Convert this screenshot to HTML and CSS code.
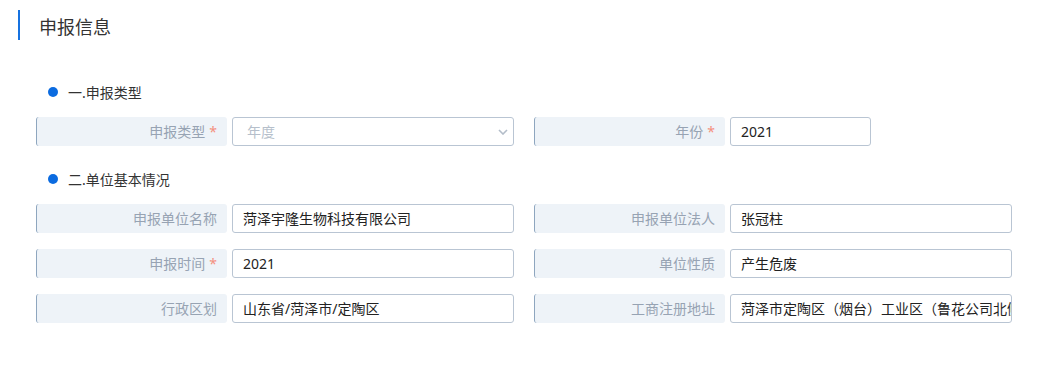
FILE: index.html
```html
<!DOCTYPE html>
<html lang="zh">
<head>
<meta charset="utf-8">
<link rel="stylesheet" href="styles.css">
</head>
<body>
<div class="page">
  <div class="header"><span class="bar"></span><h1 class="title">申报信息</h1></div>
  <div class="form">
    <div class="section-title"><span class="dot"></span>一.申报类型</div>
    <div class="rows">
      <div class="row">
        <div class="field">
          <div class="label">申报类型<span class="req">*</span></div>
          <div class="input select"><span class="placeholder">年度</span>
            <svg class="chev" width="10" height="6" viewBox="0 0 10 6"><path d="M1 1 L5 5 L9 1" fill="none" stroke="#b3bdc9" stroke-width="1.6"/></svg>
          </div>
        </div>
        <div class="field">
          <div class="label">年份<span class="req">*</span></div>
          <div class="input short">2021</div>
        </div>
      </div>
    </div>
    <div class="section-title second"><span class="dot"></span>二.单位基本情况</div>
    <div class="rows">
      <div class="row">
        <div class="field">
          <div class="label">申报单位名称</div>
          <div class="input">菏泽宇隆生物科技有限公司</div>
        </div>
        <div class="field">
          <div class="label">申报单位法人</div>
          <div class="input">张冠柱</div>
        </div>
      </div>
      <div class="row">
        <div class="field">
          <div class="label">申报时间<span class="req">*</span></div>
          <div class="input">2021</div>
        </div>
        <div class="field">
          <div class="label">单位性质</div>
          <div class="input">产生危废</div>
        </div>
      </div>
      <div class="row">
        <div class="field">
          <div class="label">行政区划</div>
          <div class="input">山东省/菏泽市/定陶区</div>
        </div>
        <div class="field">
          <div class="label">工商注册地址</div>
          <div class="input clip">菏泽市定陶区（烟台）工业区（鲁花公司北侧）</div>
        </div>
      </div>
    </div>
  </div>
</div>
</body>
</html>
```

FILE: styles.css
```css
* { box-sizing: border-box; }
html, body { margin: 0; padding: 0; background: #fff; }
body {
  font-family: "Noto Sans", "Noto Sans CJK SC", sans-serif;
  font-size: 14px;
  color: #333;
}
.page { width: 1040px; height: 374px; padding-top: 10px; }
.header { display: flex; align-items: center; height: 30px; padding-left: 18px; }
.bar { width: 2px; height: 30px; background: #1672e0; }
.title {
  margin: 0 0 0 19px;
  padding-top: 4px;
  font-size: 18px;
  font-weight: normal;
  color: #333;
  line-height: 26px;
}
.form { padding-left: 36px; width: 1012px; }
.section-title {
  display: flex;
  align-items: center;
  height: 20px;
  margin-top: 42px;
  margin-bottom: 15px;
  padding-left: 12px;
  font-size: 14px;
  color: #333;
}
.section-title.second { margin-top: 23px; }
.dot {
  width: 10px;
  height: 10px;
  border-radius: 50%;
  background: #0b6be0;
  margin-right: 10px;
}
.rows { display: flex; flex-direction: column; gap: 16px; }
.row { display: flex; gap: 20px; }
.field { display: flex; gap: 5px; width: 478px; }
.label {
  width: 191px;
  height: 29px;
  background: #eef3f8;
  border-left: 1px solid #8ea6bf;
  border-radius: 3px;
  text-align: right;
  padding-right: 10px;
  line-height: 29px;
  color: #97a3b3;
  font-size: 14px;
  white-space: nowrap;
}
.req { color: #f4907e; margin-left: 4px; }
.input {
  width: 282px;
  height: 29px;
  border: 1px solid #b9c5d3;
  border-radius: 3px;
  padding: 0 10px;
  line-height: 27px;
  color: #222;
  white-space: nowrap;
  overflow: hidden;
}
.input.short { width: 141px; }
.select { display: flex; align-items: center; justify-content: space-between; padding: 0 5px 0 14px; }
.placeholder { color: #b6bfcb; }
.chev { margin-right: 0; }
.clip { text-overflow: clip; }
```
